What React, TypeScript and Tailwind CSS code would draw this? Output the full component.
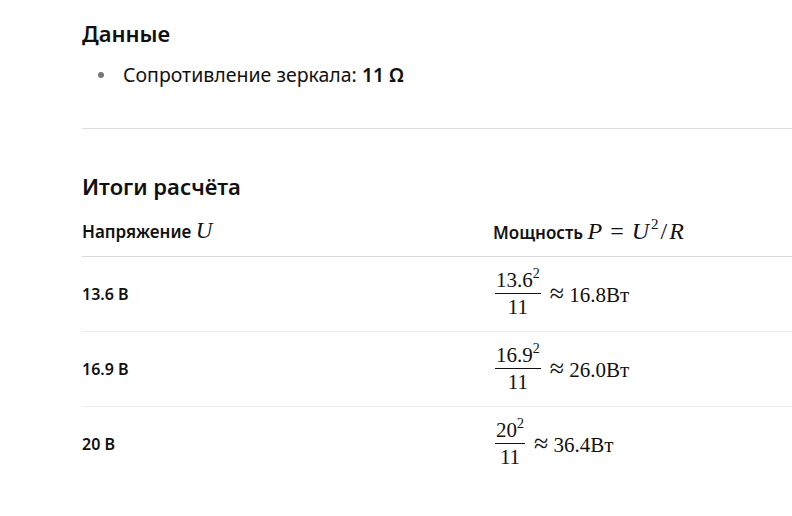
import React from "react";

const math = { fontFamily: '"Liberation Serif", "DejaVu Serif", serif' };

function Frac({ num, sup, den }: { num: string; sup: string; den: string }) {
  return (
    <span className="inline-flex flex-col items-center align-middle px-[2px]" style={math}>
      <span className="text-[21px] leading-[26px] px-[1px]">
        {num}
        <sup className="text-[14px] top-[-9px]">{sup}</sup>
      </span>
      <span className="h-[1px] w-full bg-[#111]" />
      <span className="text-[21px] leading-[27px]">{den}</span>
    </span>
  );
}

const rows = [
  { u: "13.6 В", num: "13.6", den: "11", res: "16.8Вт" },
  { u: "16.9 В", num: "16.9", den: "11", res: "26.0Вт" },
  { u: "20 В", num: "20", den: "11", res: "36.4Вт" },
];

export default function App() {
  return (
    <div
      className="w-[792px] h-[516px] overflow-hidden bg-white text-[#111] pl-[82px]"
      style={{ fontFamily: '"Noto Sans", "Open Sans", sans-serif' }}
    >
      <div className="w-[760px]">
        <h2 className="text-[22px] font-semibold leading-[28px] pt-[19px]">Данные</h2>
        <ul className="mt-[14px]">
          <li className="flex items-center text-[19.5px] leading-[28px]">
            <span className="w-[6px] h-[6px] rounded-full bg-[#777] ml-[16px] mr-[19px]" />
            <span>
              Сопротивление зеркала: <strong className="font-semibold">11 Ω</strong>
            </span>
          </li>
        </ul>
        <div className="h-px bg-[#dcdcdc] mt-[39px]" />
        <h2 className="text-[22px] font-semibold leading-[28px] mt-[43px]">Итоги расчёта</h2>
        <table className="w-[822px] border-collapse mt-[10px]">
          <thead>
            <tr className="border-b border-[#d9d9d9]">
              <th className="w-[411px] text-left font-semibold text-[17px] h-[46px] pb-[4px]">
                Напряжение <span className="italic font-normal text-[23px]" style={math}>U</span>
              </th>
              <th className="text-left font-semibold text-[17px] pb-[4px]">
                Мощность{" "}
                <span className="italic font-normal text-[24px]" style={math}>
                  P
                  <span className="not-italic mx-[8px]">=</span>U
                  <sup className="not-italic text-[15px] top-[-10px] ml-[2px]">2</sup>
                  <span className="not-italic mx-[2px]">/</span>R
                </span>
              </th>
            </tr>
          </thead>
          <tbody>
            {rows.map((r, i) => (
              <tr key={i} className={i < 2 ? "border-b border-[#ececec]" : ""}>
                <td className="h-[75px] text-[16px] font-semibold">{r.u}</td>
                <td className="h-[75px] text-[21px]" style={math}>
                  <Frac num={r.num} sup="2" den={r.den} />
                  <span className="ml-[7px] align-middle">
                    <span className="text-[26px]">≈</span> {r.res}
                  </span>
                </td>
              </tr>
            ))}
          </tbody>
        </table>
      </div>
    </div>
  );
}
